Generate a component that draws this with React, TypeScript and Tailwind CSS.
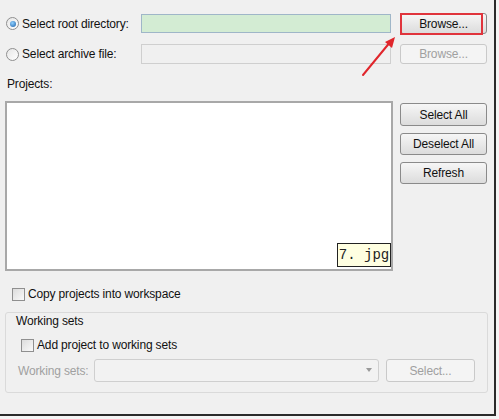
import React from "react";

const F = { fontFamily: '"Liberation Sans", Arial, sans-serif' };

function Radio({ checked }: { checked?: boolean }) {
  return (
    <span className="relative inline-block w-[13px] h-[13px] rounded-full border border-[#8f8f8f] bg-gradient-to-br from-[#e6e6e6] to-[#ffffff] shrink-0">
      {checked && (
        <span className="absolute left-[2.5px] top-[2.5px] w-[6px] h-[6px] rounded-full bg-[radial-gradient(circle_at_40%_35%,#8fd0ff,#1a5fa8)]" />
      )}
    </span>
  );
}

function Check() {
  return (
    <span className="inline-block w-[13px] h-[13px] border border-[#8f8f8f] bg-gradient-to-br from-[#dcdcdc] to-[#fafafa] shrink-0" />
  );
}

function Btn({ children, disabled, className }: { children: React.ReactNode; disabled?: boolean; className?: string }) {
  return (
    <div
      className={
        "flex items-center justify-center rounded-[3px] border text-[12px] " +
        (disabled
          ? "border-[#c9c9c9] bg-[#f4f4f4] text-[#a0a0a0] "
          : "border-[#8a8a8a] bg-gradient-to-b from-[#f6f6f6] to-[#dcdcdc] text-[#111] ") +
        (className || "")
      }
    >
      {children}
    </div>
  );
}

export default function App() {
  return (
    <div className="w-[499px] h-[419px] bg-[#f4f4f4] overflow-hidden" style={F}>
      <div className="relative w-[496px] h-[416px] bg-[#f0f0f0] border-r-[2px] border-b-[2px] border-[#2a2a2a] text-[12px] text-[#111] tracking-[-0.15px]">
        {/* Row 1 */}
        <div className="flex items-center pt-[13px] h-[34px]">
          <div className="flex items-center w-[141px] pl-[6px] gap-[3px]">
            <Radio checked />
            <span>Select root directory:</span>
          </div>
          <div className="w-[250px] h-[19px] border border-[#9fb6c8] bg-[#d3ecd3]" />
          <div className="relative ml-[9px]">
            <Btn className="w-[87px] h-[21px]">Browse...</Btn>
            <div className="absolute left-0 top-0 w-[83px] h-[22px] border-2 border-[#e0343c]" />
          </div>
        </div>
        {/* Row 2 */}
        <div className="flex items-center mt-[10px] h-[20px]">
          <div className="flex items-center w-[141px] pl-[6px] gap-[3px]">
            <Radio />
            <span>Select archive file:</span>
          </div>
          <div className="w-[250px] h-[20px] border border-[#cfcfcf] bg-[#f0f0f0]" />
          <Btn disabled className="ml-[9px] w-[87px] h-[20px]">Browse...</Btn>
        </div>
        {/* Projects label */}
        <div className="pl-[7px] mt-[14px] h-[12px] leading-[12px]">Projects:</div>
        {/* Projects area */}
        <div className="flex mt-[11px] pl-[5px]">
          <div className="relative w-[388px] h-[170px] bg-white border-2 border-[#a8a8a8]">
            <div
              className="absolute right-0 bottom-[2px] w-[54px] h-[24px] bg-[#ffffe1] border border-[#222] flex items-center justify-center whitespace-nowrap text-[14px] tracking-normal text-[#222]"
              style={{ fontFamily: '"Liberation Mono", "Courier New", monospace' }}
            >
              7. jpg
            </div>
          </div>
          <div className="flex flex-col ml-[7px] pt-[2px] gap-[7px]">
            <Btn className="w-[87px] h-[23px]">Select All</Btn>
            <Btn className="w-[87px] h-[22px]">Deselect All</Btn>
            <Btn className="w-[87px] h-[22px]">Refresh</Btn>
          </div>
        </div>
        {/* Copy */}
        <div className="flex items-center gap-[3px] pl-[12px] mt-[14px]">
          <Check />
          <span>Copy projects into workspace</span>
        </div>
        {/* Working sets group */}
        <div className="ml-[5px] mt-[9px] w-[483px] h-[81px] border border-[#dadada] rounded-[3px] pl-[10px] pt-[1px]">
          <div className="h-[14px] leading-[14px]">Working sets</div>
          <div className="flex items-center gap-[3px] pl-[5px] mt-[8px]">
            <Check />
            <span>Add project to working sets</span>
          </div>
          <div className="flex items-center mt-[5px]">
            <span className="w-[78px] pl-[2px] text-[#a0a0a0]">Working sets:</span>
            <div className="relative w-[285px] h-[23px] border border-[#cfcfcf] rounded-[3px] bg-[#f2f2f2]">
              <span className="absolute right-[6px] top-[8px] w-0 h-0 border-l-[3px] border-r-[3px] border-t-[4px] border-l-transparent border-r-transparent border-t-[#9a9a9a]" />
            </div>
            <Btn disabled className="ml-[7px] w-[89px] h-[23px]">Select...</Btn>
          </div>
        </div>
        {/* Red arrow */}
        <svg className="absolute left-[355px] top-[32px]" width="50" height="50" viewBox="0 0 50 50">
          <line x1="8" y1="43" x2="36" y2="9" stroke="#e0262c" strokeWidth="2" strokeLinecap="round" />
          <polygon points="40,5 30,10 37,16" fill="#e0262c" />
        </svg>
      </div>
    </div>
  );
}
